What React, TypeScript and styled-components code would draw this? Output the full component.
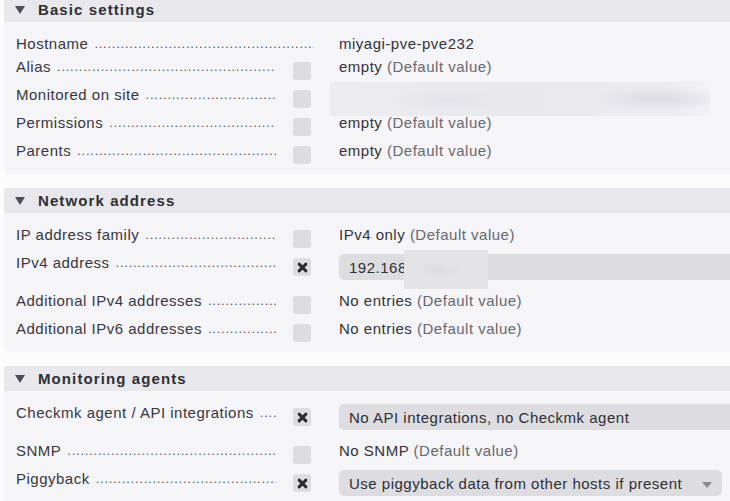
import React from "react";
import styled, { createGlobalStyle } from "styled-components";

const GlobalStyle = createGlobalStyle`
	html, body {
		margin: 0;
		padding: 0;
		background: #fcfcfd;
		overflow: hidden;
	}
	body {
		font-family: "Liberation Sans", Arial, sans-serif;
		font-size: 15px;
		color: #333;
		letter-spacing: 0.5px;
	}
	* {
		box-sizing: border-box;
	}
`;

const Page = styled.div`
	width: 730px;
	height: 501px;
	overflow: hidden;
`;

const Panel = styled.section<{ $first?: boolean }>`
	width: 800px;
	margin: ${(p) => (p.$first ? "-3px" : "0")} 0 14px 4px;
`;

const PanelHeader = styled.div`
	display: flex;
	align-items: center;
	gap: 13px;
	height: 25px;
	padding-left: 11px;
	background: #e7e7ec;
	border-radius: 4px 4px 0 0;
	font-weight: bold;
	letter-spacing: 1.1px;
	color: #2f2f33;
`;

const Triangle = styled.span`
	width: 0;
	height: 0;
	border-left: 5px solid transparent;
	border-right: 5px solid transparent;
	border-top: 8px solid #4b4e58;
	margin-top: 1px;
`;

const PanelBody = styled.div`
	background: #f4f4f9;
	border-radius: 0 0 5px 5px;
	padding: 13px 0 4px 12px;
`;

const Row = styled.div`
	display: flex;
	align-items: flex-start;
	padding-bottom: 5px;
`;

const Legend = styled.div<{ $wide?: boolean }>`
	display: flex;
	width: ${(p) => (p.$wide ? 323 : 262)}px;
	padding-right: ${(p) => (p.$wide ? 25 : 2)}px;
	line-height: 18px;
	white-space: nowrap;
	color: #38383c;
`;

const Dots = styled.span`
	flex: 1;
	overflow: hidden;
	margin-left: 6px;
	font-size: 13px;
	letter-spacing: 0.75px;
	color: #555;
`;

const CheckCell = styled.div`
	width: 61px;
	height: 23px;
	padding: 4px 0 0 15px;
`;

const CheckBox = styled.div`
	width: 18px;
	height: 18px;
	border-radius: 3px;
	background: #dcdce1;
	display: flex;
	align-items: center;
	justify-content: center;
`;

const Value = styled.div`
	line-height: 18px;
	white-space: nowrap;
	color: #333337;
`;

const Muted = styled.span`
	color: #68686d;
`;

const Redacted = styled.div`
	width: 380px;
	height: 34px;
	margin: -4px 0 -12px -9px;
	background:
		radial-gradient(ellipse 70px 12px at 330px 17px, rgba(215, 215, 222, 0.8), transparent),
		radial-gradient(ellipse 60px 10px at 120px 18px, rgba(222, 222, 228, 0.6), transparent),
		linear-gradient(90deg, #ebebf0, #e8e8ed 50%, #ebebf0 90%, #f2f2f7);
`;

const InputBox = styled.div<{ $width: number }>`
	position: relative;
	width: ${(p) => p.$width}px;
	height: 26px;
	margin-bottom: 7px;
	padding: 0 10px;
	border-radius: 5px;
	background: #dcdce1;
	display: flex;
	align-items: center;
	justify-content: space-between;
	white-space: nowrap;
	color: #2f2f33;
`;

const InputBlur = styled.div`
	position: absolute;
	left: 65px;
	top: -4px;
	width: 84px;
	height: 39px;
	background: radial-gradient(ellipse 30px 10px at 35px 20px, #dadadf, #e3e3e8 80%);
`;

const DropArrow = styled.span`
	width: 0;
	height: 0;
	border-left: 5px solid transparent;
	border-right: 5px solid transparent;
	border-top: 6px solid #8a8a90;
	margin-top: 3px;
`;

const Cross = () => (
	<svg width="11" height="11" viewBox="0 0 12 12">
		<path d="M2.3 2.3 L9.7 9.7 M9.7 2.3 L2.3 9.7" stroke="#2a2a2e" strokeWidth="3.2" strokeLinecap="round" />
	</svg>
);

const DOTS = ".".repeat(120);

type Field = {
	label: string;
	checked?: boolean;
	noCheck?: boolean;
	value: React.ReactNode;
};

const Label = ({ text, wide }: { text: string; wide?: boolean }) => (
	<Legend $wide={wide}>
		{text}
		<Dots>{DOTS}</Dots>
	</Legend>
);

const FieldRow = ({ label, checked, noCheck, value }: Field) => (
	<Row>
		<Label text={label} wide={noCheck} />
		{!noCheck && (
			<CheckCell>
				<CheckBox>{checked && <Cross />}</CheckBox>
			</CheckCell>
		)}
		{value}
	</Row>
);

const DefaultVal = ({ text }: { text: string }) => (
	<Value>
		{text} <Muted>(Default value)</Muted>
	</Value>
);

const Section = ({ title, first, children }: { title: string; first?: boolean; children: React.ReactNode }) => (
	<Panel $first={first}>
		<PanelHeader>
			<Triangle />
			{title}
		</PanelHeader>
		<PanelBody>{children}</PanelBody>
	</Panel>
);

const App = () => {
	return (
		<Page>
			<GlobalStyle />
			<Section title="Basic settings" first>
				<FieldRow label="Hostname" noCheck value={<Value>miyagi-pve-pve232</Value>} />
				<FieldRow label="Alias" value={<DefaultVal text="empty" />} />
				<FieldRow label="Monitored on site" value={<Redacted />} />
				<FieldRow label="Permissions" value={<DefaultVal text="empty" />} />
				<FieldRow label="Parents" value={<DefaultVal text="empty" />} />
			</Section>
			<Section title="Network address">
				<FieldRow label="IP address family" value={<DefaultVal text="IPv4 only" />} />
				<FieldRow
					label="IPv4 address"
					checked
					value={
						<InputBox $width={420}>
							192.168
							<InputBlur />
						</InputBox>
					}
				/>
				<FieldRow label="Additional IPv4 addresses" value={<DefaultVal text="No entries" />} />
				<FieldRow label="Additional IPv6 addresses" value={<DefaultVal text="No entries" />} />
			</Section>
			<Section title="Monitoring agents">
				<FieldRow
					label="Checkmk agent / API integrations"
					checked
					value={<InputBox $width={420}>No API integrations, no Checkmk agent</InputBox>}
				/>
				<FieldRow label="SNMP" value={<DefaultVal text="No SNMP" />} />
				<FieldRow
					label="Piggyback"
					checked
					value={
						<InputBox $width={383}>
							Use piggyback data from other hosts if present
							<DropArrow />
						</InputBox>
					}
				/>
			</Section>
		</Page>
	);
};

export default App;
